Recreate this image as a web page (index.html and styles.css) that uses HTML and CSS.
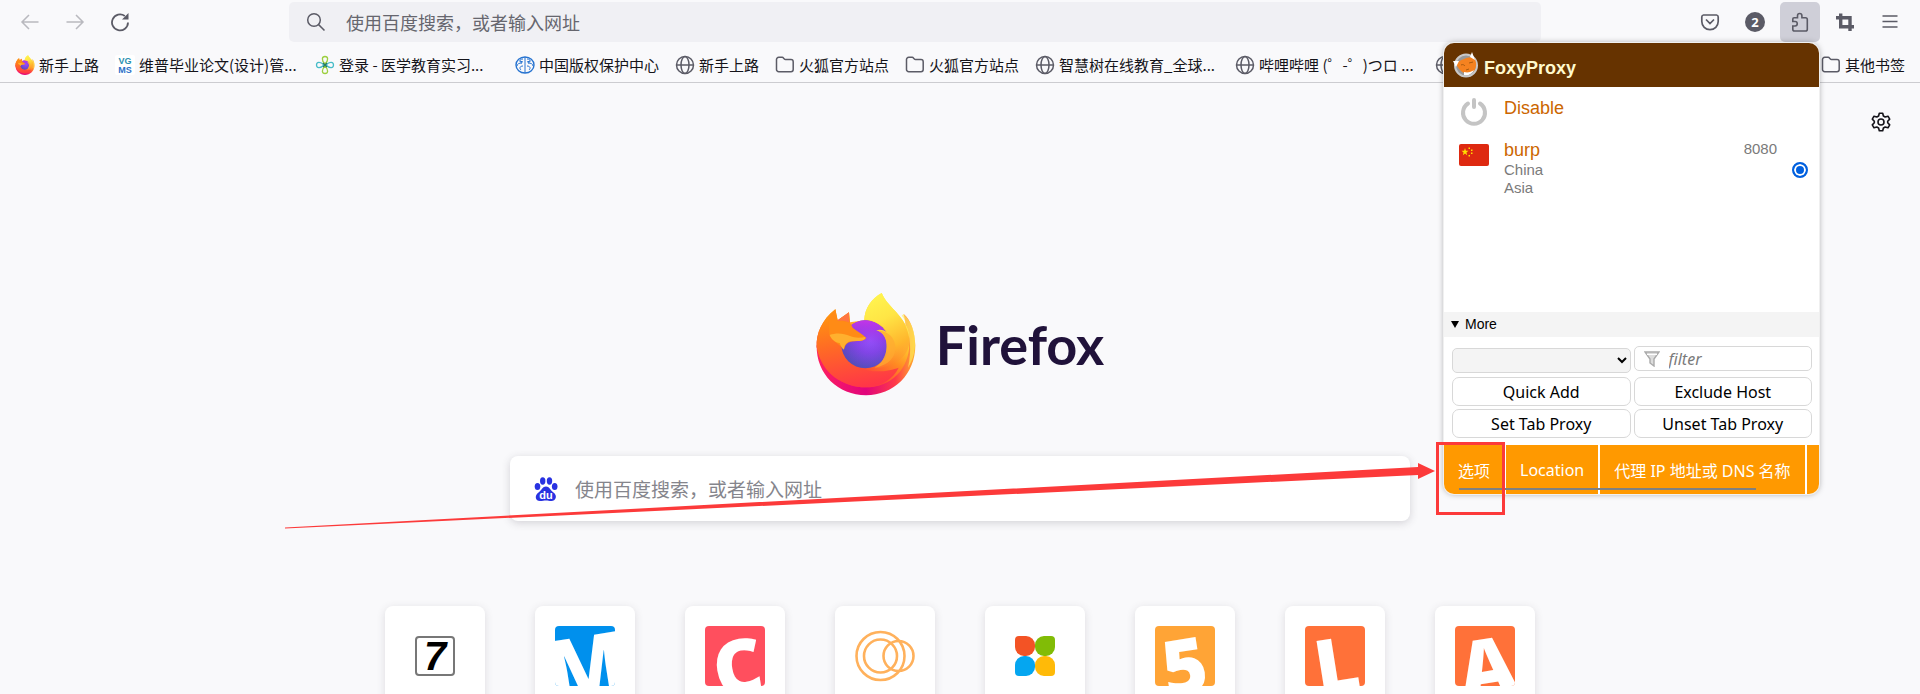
FILE: index.html
```html
<!DOCTYPE html>
<html lang="zh-CN">
<head>
<meta charset="utf-8">
<title>Firefox</title>
<link rel="stylesheet" href="styles.css">
</head>
<body>
<svg class="defs" aria-hidden="true">
  <defs>
    <linearGradient id="fx-body" x1="0.85" y1="0.1" x2="0.25" y2="1">
      <stop offset="0.05" stop-color="#fff44f"/><stop offset="0.3" stop-color="#ffc82e"/><stop offset="0.5" stop-color="#ff8a22"/><stop offset="0.75" stop-color="#ff4538"/><stop offset="1" stop-color="#ff2a50"/>
    </linearGradient>
    <linearGradient id="fx-left" x1="0.3" y1="0" x2="0.5" y2="1">
      <stop offset="0" stop-color="#ff980e"/><stop offset="0.45" stop-color="#ff6a25"/><stop offset="1" stop-color="#ff3647"/>
    </linearGradient>
    <linearGradient id="fx-rim" x1="0" y1="0" x2="1" y2="0">
      <stop offset="0" stop-color="#ff2060"/><stop offset="0.5" stop-color="#e0047c"/><stop offset="0.8" stop-color="#ff3a48"/><stop offset="1" stop-color="#ffb22c"/>
    </linearGradient>
    <radialGradient id="fx-globe" cx="0.6" cy="0.4" r="0.7">
      <stop offset="0" stop-color="#9059ff"/><stop offset="0.4" stop-color="#8048e8"/><stop offset="1" stop-color="#4b4fb0"/>
    </radialGradient>
    <linearGradient id="fx-shade" x1="0" y1="0" x2="0" y2="1">
      <stop offset="0" stop-color="#c435e8"/><stop offset="0.5" stop-color="#a030e8" stop-opacity="0.2"/><stop offset="1" stop-color="#6030c0" stop-opacity="0"/>
    </linearGradient>
    <linearGradient id="fx-flame" x1="0.3" y1="0" x2="0.6" y2="1">
      <stop offset="0" stop-color="#fff44f"/><stop offset="0.35" stop-color="#ffe545"/><stop offset="0.75" stop-color="#ffb52c"/><stop offset="1" stop-color="#ff7a30" stop-opacity="0"/>
    </linearGradient>
    <symbol id="firefox" viewBox="50 36 300 310">
      <path fill="url(#fx-rim)" d="M52 195C50 282 117 345 200 345S348 282 348 195C346 155 335 118 313 101C316 116 319 124 319 138Z"/>
      <path fill="url(#fx-body)" d="M108 87C68 118 50 160 52 200C66 280 132 321 200 321C275 321 330 265 330 190C329 160 326 142 319 135C297 92 262 75 247 38C216 55 196 84 195 120L152 126L149 96L115 120Z"/>
      <path fill="url(#fx-left)" d="M108 87C68 118 50 160 52 200C66 280 132 321 200 321C245 320 282 296 298 262C260 276 170 290 135 215L152 126L149 96L115 120Z"/>
      <circle cx="198" cy="192" r="72" fill="url(#fx-globe)"/>
      <circle cx="198" cy="192" r="72" fill="url(#fx-shade)"/>
      <path fill="url(#fx-flame)" d="M247 38C216 55 196 84 195 118C225 119 252 133 265 157C254 148 242 146 231 150C254 157 263 178 262 200C261 228 245 252 225 264C275 262 328 235 330 185C329 160 326 145 319 135C297 92 262 75 247 38Z"/>
      <path fill="#ffa930" opacity="0.7" d="M231 150C256 156 263 178 262 203C261 228 245 252 225 262C270 255 288 230 288 203C288 175 270 152 231 150Z"/>
      <path fill="#fff05a" d="M313 101C338 125 348 160 347 195C346 220 338 245 326 262C338 210 332 165 319 138C318 124 316 114 307 106Z" opacity="0.65"/>
      <path fill="#ff8b16" d="M108 87C100 95 92 106 88 115L90 163C98 180 115 190 135 205C136 195 142 187 154 184C172 181 193 185 201 173C192 162 174 153 160 142C157 136 154 130 149 126C136 123 124 120 115 122C111 111 109 98 108 87Z"/>
      <path fill="#ffb02e" d="M91 164C110 157 132 158 152 167C168 174 185 172 198 170C199 181 180 183 160 182C142 183 134 194 134 208C127 204 124 196 121 188C107 187 97 178 91 164Z"/>
      <path fill="#ff7640" d="M115 120L149 96L149 126C139 122 126 120 115 122Z"/>
    </symbol>
    <symbol id="globe" viewBox="0 0 20 20">
      <g fill="none" stroke="#5b5b66" stroke-width="1.5"><circle cx="10" cy="10" r="8.5"/><ellipse cx="10" cy="10" rx="4" ry="8.5"/><path d="M1.5 10H18.5"/></g>
    </symbol>
    <symbol id="folder" viewBox="0 0 20 20">
      <path fill="none" stroke="#5b5b66" stroke-width="1.5" stroke-linejoin="round" d="M1.5 4.500A2.200 2.200 0 0 1 3.700 2.300H7.200C8.500 2.300 9.200 4.600 10.500 4.600H16A2.200 2.200 0 0 1 18.200 6.800V14.500A2.200 2.200 0 0 1 16 16.700H3.700A2.200 2.200 0 0 1 1.500 14.500Z"/>
    </symbol>
  </defs>
</svg>

<header>
  <nav class="toolbar">
    <button class="tool faded" aria-label="后退"><svg viewBox="0 0 20 20"><path d="M18.500 10H2M9 3L2 10L9 17"/></svg></button>
    <button class="tool faded" aria-label="前进"><svg viewBox="0 0 20 20"><path d="M1.500 10H18M11 3L18 10L11 17"/></svg></button>
    <button class="tool" aria-label="刷新"><svg viewBox="0 0 20 20"><path stroke-width="1.800" d="M18 10.500A8 8 0 1 1 14.800 4"/><path class="solid" d="M18.500 1V7.500H12Z"/></svg></button>
    <div class="urlbar">
      <svg viewBox="0 0 20 20"><circle cx="8" cy="8" r="6.300"/><path d="M12.600 12.600L18.500 18.500"/></svg>
      <input type="text" aria-label="地址栏" placeholder="使用百度搜索，或者输入网址">
    </div>
    <button class="tool" aria-label="Pocket"><svg viewBox="0 0 20 20"><path stroke-width="1.700" d="M3.500 3H16.500A2 2 0 0 1 18.200 5V9.500A8.200 8.200 0 0 1 1.800 9.500V5A2 2 0 0 1 3.500 3ZM6 7.500L10 11.500L14 7.500"/></svg></button>
    <button class="tool" aria-label="账户"><span class="count">2</span></button>
    <button class="tool active" aria-label="扩展"><svg viewBox="0 0 20 20"><path stroke-width="1.600" d="M2.800 9.500V7A1.300 1.300 0 0 1 4.100 5.700H7.500V3.700A2.200 2.200 0 0 1 11.900 3.700V5.700H15.500A1.800 1.800 0 0 1 17.300 7.500V17.200A1.800 1.800 0 0 1 15.500 19H4.600A1.800 1.800 0 0 1 2.800 17.200V14H5A2.200 2.200 0 0 0 5 9.500Z"/></svg></button>
    <button class="tool" aria-label="截图"><svg viewBox="0 0 20 20"><path stroke-width="3.400" d="M1 5.700H15V19M5.700 1.500V14.700H19"/></svg></button>
    <button class="tool" aria-label="菜单"><svg viewBox="0 0 20 20"><path d="M2.500 4H17.500M2.500 9.500H17.500M2.500 15H17.500"/></svg></button>
  </nav>
  <nav class="bookmarks">
    <a href="#"><svg><use href="#firefox"/></svg><span>新手上路</span></a>
    <a href="#" class="long"><svg viewBox="0 0 20 20" class="vgms"><rect width="20" height="20" rx="2" fill="#fff"/><text x="10" y="9" fill="#2a8fb0">VG</text><text x="10" y="18" fill="#2a70c8">MS</text></svg><span>维普毕业论文(设计)管...</span></a>
    <a href="#" class="long"><svg viewBox="0 0 20 20" fill="none" stroke-width="1.300"><path stroke="#9ccf3f" d="M10 9C6 5 7 1.500 10 1.500S14 5 10 9ZM10 11C6 15 7 18.500 10 18.500S14 15 10 11Z"/><path stroke="#46bcc8" d="M9 10C5 6 1.500 7 1.500 10S5 14 9 10ZM11 10C15 6 18.500 7 18.500 10S15 14 11 10Z"/><path stroke="#287c62" d="M8 8L12 12M12 8L8 12"/></svg><span>登录 - 医学教育实习...</span></a>
    <a href="#"><svg viewBox="0 0 20 20" fill="none" stroke="#2673d0"><ellipse cx="10" cy="10" rx="9" ry="8" stroke-width="1.400"/><path d="M10 2V18M8 4C4 4 4 7 7 8C4 8 2 9 2 11M8 11C5 11 4 13 6 15M12 4C16 4 16 7 13 8C16 8 18 9 18 11M12 11C15 11 16 13 14 15M5 6L8 7M15 6L12 7"/></svg><span>中国版权保护中心</span></a>
    <a href="#"><svg><use href="#globe"/></svg><span>新手上路</span></a>
    <a href="#"><svg><use href="#folder"/></svg><span>火狐官方站点</span></a>
    <a href="#"><svg><use href="#folder"/></svg><span>火狐官方站点</span></a>
    <a href="#" class="long"><svg><use href="#globe"/></svg><span>智慧树在线教育_全球...</span></a>
    <a href="#" class="long"><svg><use href="#globe"/></svg><span>哔哩哔哩 (゜-゜)つロ ...</span></a>
    <a href="#" aria-label="书签"><svg><use href="#globe"/></svg></a>
    <a href="#" class="other"><svg><use href="#folder"/></svg><span>其他书签</span></a>
  </nav>
</header>

<main>
  <button class="settings" aria-label="设置"><svg viewBox="0 0 20 20"><circle cx="10" cy="10" r="3"/><path d="M8.300 1.200H11.700L12.400 4L14.200 5L17 4.200L18.700 7.100L16.700 9.200V10.800L18.700 12.900L17 15.800L14.200 15L12.400 16L11.700 18.800H8.300L7.600 16L5.800 15L3 15.800L1.300 12.900L3.300 10.800V9.200L1.300 7.100L3 4.200L5.800 5L7.600 4Z"/></svg></button>
  <h1 class="brand"><svg><use href="#firefox"/></svg><span>Firefox</span></h1>
  <form class="search">
    <svg viewBox="0 0 24 24"><g fill="#2932e1"><ellipse cx="3.500" cy="9.500" rx="2.800" ry="3.500"/><ellipse cx="8.700" cy="4" rx="2.700" ry="3.700"/><ellipse cx="15.500" cy="4" rx="2.700" ry="3.700"/><ellipse cx="20.700" cy="9.500" rx="2.800" ry="3.500"/><path d="M12 9.500C15.500 9.500 16 13 19.500 15.500C24 19 21.500 24 17.500 24C15 24 14 23.500 12 23.500S8.500 24 6 24C1.500 24 0 19 4.500 15.500C8 13 8.500 9.500 12 9.500Z"/></g><text x="12" y="22">du</text></svg>
    <input type="text" aria-label="搜索" placeholder="使用百度搜索，或者输入网址">
  </form>
  <div class="tiles">
    <a href="#" class="tile"><span class="seven">7</span></a>
    <a href="#" class="tile"><svg class="blue" viewBox="0 0 60 60"><text x="36" y="70" transform="rotate(-9 36 70)">M</text></svg></a>
    <a href="#" class="tile"><svg class="pink" viewBox="0 0 60 60"><text x="37" y="68" transform="rotate(-9 37 68)">C</text></svg></a>
    <a href="#" class="tile"><svg viewBox="0 0 60 60" fill="none" stroke="#ffb15c" stroke-width="2.600"><circle cx="25.500" cy="30" r="24"/><circle cx="25.500" cy="30" r="16.500"/><circle cx="43.500" cy="30" r="15"/></svg></a>
    <a href="#" class="tile"><span class="petals"><i></i><i></i><i></i><i></i></span></a>
    <a href="#" class="tile"><svg class="amber" viewBox="0 0 60 60"><text x="34" y="67" transform="rotate(-9 34 67)">5</text></svg></a>
    <a href="#" class="tile"><svg class="orange" viewBox="0 0 60 60"><text x="36" y="66" transform="rotate(-9 36 66)">L</text></svg></a>
    <a href="#" class="tile"><svg class="orange" viewBox="0 0 60 60"><text x="36" y="67" transform="rotate(-9 36 67)">A</text></svg></a>
  </div>
</main>

<section class="popup">
  <h2><svg viewBox="0 0 26 26"><circle cx="13" cy="13.500" r="11" fill="#999" stroke="#c8c8c8" stroke-width="2"/><path fill="#f58220" d="M3 11C8 8 14 5 20 5C24 9 24 15 21 19C18 21 14 21 11 21C7 19 4 15 3 11Z"/><path fill="#fff" d="M0 9L6 9L3 15ZM19 0L22 8L17 5ZM11 20C15 21 18 20 21 18C19 22 15 24 11 23Z"/><path stroke="#a85a10" fill="none" d="M8 13C10 12 11 13 12 14M16 11L20 10M13 18L16 17"/></svg><span>FoxyProxy</span></h2>
  <div class="proxies">
    <div class="proxy">
      <svg viewBox="0 0 30 30"><path fill="none" stroke="#c4c4c4" stroke-width="4" stroke-linecap="round" d="M9 6.500A11 11 0 1 0 21 6.500M15 3V10"/></svg>
      <div class="names"><strong>Disable</strong></div>
    </div>
    <label class="proxy">
      <svg viewBox="0 0 30 30"><rect y="5" width="30" height="22" rx="2" fill="#de2910"/><path fill="#ffde00" d="M6 9L6.900 11.800H9.500L7.400 13.500L8.200 16.200L6 14.500L3.800 16.200L4.600 13.500L2.500 11.800H5.100ZM9.500 8.500h1.500v1.500h-1.500ZM12 10.500h1.500v1.500H12ZM12 13.500h1.500v1.500H12ZM9.500 16h1.500v1.500h-1.500Z"/></svg>
      <span class="names"><strong>burp</strong><span>China</span><span>Asia</span></span>
      <span class="port">8080</span>
      <input type="radio" name="proxy" checked>
    </label>
  </div>
  <details open>
    <summary>More</summary>
    <div class="controls">
      <select aria-label="Pattern"><option></option></select>
      <div class="filter"><svg viewBox="0 0 16 16"><path fill="#ddd" stroke="#aaa" stroke-width="1.400" d="M1 1H15L10 8V15L6 12V8Z"/><path stroke="#fff" d="M3 3.500H13"/></svg><input type="text" aria-label="filter" placeholder="filter"></div>
      <button>Quick Add</button>
      <button>Exclude Host</button>
      <button>Set Tab Proxy</button>
      <button>Unset Tab Proxy</button>
    </div>
  </details>
  <footer><button>选项</button><button>Location</button><button>代理 IP 地址或 DNS 名称</button><span class="thumb"></span></footer>
</section>

<svg class="arrow" viewBox="0 0 1150 70" aria-hidden="true"><path fill="#fc3a3a" d="M0 64.500L570 34L1133 4V0L1150 8L1133 16V12L570 38.500L0 65.500Z"/></svg>
<div class="marker"></div>
</body>
</html>
```
FILE: styles.css
```css
* { box-sizing: border-box; }
body {
  margin: 0;
  height: 100vh;
  overflow: hidden;
  position: relative;
  background: #f9f9fb;
  color: #15141a;
  font-family: "Noto Sans", "Noto Sans CJK SC", sans-serif;
}
button { border: 0; background: none; padding: 0; font: inherit; color: inherit; }
a { color: inherit; text-decoration: none; }
input { font: inherit; min-width: 0; }
.defs { position: absolute; width: 0; height: 0; }

.toolbar { display: flex; align-items: center; gap: 5px; height: 44px; padding: 0 10px; }
.tool { display: grid; place-items: center; width: 40px; height: 40px; border-radius: 5px; }
.tool svg, .urlbar svg { width: 20px; height: 20px; fill: none; stroke: #5b5b66; stroke-width: 1.5; }
.tool .solid { fill: #5b5b66; stroke: none; }
.faded { opacity: 0.4; }
.active { background: #cfcfd8; }
.count { display: grid; place-items: center; width: 20px; height: 20px; border-radius: 50%; background: #5b5b66; color: #fff; font: bold 13px "Open Sans", sans-serif; }
.urlbar { flex: 1; display: flex; align-items: center; gap: 20px; height: 40px; margin: 0 144px; padding: 0 17px; border-radius: 5px; background: #f0f0f4; }
.urlbar input { flex: 1; border: 0; padding: 0; background: none; font-family: "Noto Sans CJK SC", sans-serif; font-size: 18px; }
.urlbar input::placeholder { color: #66666e; opacity: 1; }

.bookmarks { display: flex; align-items: center; gap: 16px; height: 39px; padding: 3px 15px 0 15px; border-bottom: 1px solid #ccccd0; font: 15px/20px "Noto Sans CJK SC", sans-serif; white-space: nowrap; }
.bookmarks a { display: flex; align-items: center; gap: 4px; flex: none; }
.bookmarks svg { width: 20px; height: 20px; flex: none; }
.bookmarks .long { width: 184px; }
.bookmarks .other { margin-left: auto; }
.vgms text { font: bold 9px "Liberation Sans", sans-serif; text-anchor: middle; }

main { display: flex; flex-direction: column; align-items: center; padding-top: 209px; position: relative; }
.settings { position: absolute; top: 29px; right: 29px; width: 20px; height: 20px; }
.settings svg { display: block; fill: none; stroke: #15141a; stroke-width: 1.6; stroke-linejoin: round; }
.brand { display: flex; align-items: center; gap: 20px; margin: 0; height: 104px; color: #20123a; font: bold 54px "Lato", sans-serif; }
.brand svg { width: 100px; height: 104px; }
.search { display: flex; align-items: center; gap: 17px; width: 900px; max-width: 90%; height: 65px; margin-top: 60px; padding: 0 24px; border-radius: 8px; background: #fff; box-shadow: 0 2px 8px rgba(58, 57, 68, 0.2); }
.search svg { width: 24px; height: 24px; }
.search text { fill: #fff; font: bold 11px "Liberation Sans", sans-serif; text-anchor: middle; }
.search input { flex: 1; border: 0; padding: 0; background: none; font-family: "Noto Sans CJK SC", sans-serif; font-size: 19px; }
.search input::placeholder { color: #85858c; opacity: 1; }
.tiles { display: flex; gap: 50px; margin-top: 85px; }
.tile { display: grid; place-items: center; width: 100px; height: 100px; border-radius: 8px; background: #fff; box-shadow: 0 2px 8px rgba(58, 57, 68, 0.15); }
.tile svg { width: 60px; height: 60px; border-radius: 4px; overflow: hidden; }
.tile text { fill: #fff; font: 900 76px "Open Sans", sans-serif; text-anchor: middle; }
.tile .blue text { font-size: 84px; }
.blue { background: #0090ed; }
.pink { background: #ff4f5e; }
.amber { background: #ffa436; }
.orange { background: #ff7139; }
.seven { display: grid; place-items: center; width: 40px; height: 40px; border: 2px solid #777; border-radius: 4px; color: #000; font: italic bold 40px/36px "Liberation Sans", sans-serif; }
.petals { display: grid; grid-template-columns: 20px 20px; grid-auto-rows: 20px; }
.petals i { border-radius: 9px; }
.petals i:nth-child(1) { background: #f35325; border-top-left-radius: 4px; }
.petals i:nth-child(2) { background: #81bc06; border-top-right-radius: 4px; }
.petals i:nth-child(3) { background: #05a6f0; border-bottom-left-radius: 4px; }
.petals i:nth-child(4) { background: #ffba08; border-bottom-right-radius: 4px; }

.popup { position: absolute; top: 43px; right: 101px; width: 375px; border-radius: 10px; overflow: hidden; background: #fff; box-shadow: 0 0 0 1px #f0f0f0, 0 0 6px rgba(0, 0, 0, 0.35); }
.popup h2 { display: flex; align-items: center; gap: 5px; height: 44px; margin: 0; padding: 0 9px; background: #630; color: #fffacd; font: bold 18px "Liberation Sans", sans-serif; }
.popup h2 svg { width: 26px; height: 26px; }
.popup h2 span { padding-top: 6px; }
.proxies { display: flex; flex-direction: column; gap: 14px; height: 225px; padding: 10px 11px 0 15px; font: 15px/18px "Liberation Sans", sans-serif; color: #7a7a7a; }
.proxy { display: flex; gap: 15px; }
.proxy svg { width: 30px; height: 30px; }
.names { flex: 1; display: flex; flex-direction: column; }
.names strong { font-size: 18px; line-height: 22px; font-weight: normal; color: #c60; }
.proxy .port { padding-top: 1px; }
.proxy input { align-self: center; width: 16px; height: 16px; margin: 4px 0 0; appearance: none; border: 2px solid #0060df; border-radius: 50%; background: #0060df; box-shadow: inset 0 0 0 2px #fff; }
.proxy:first-child { height: 28px; }
summary { height: 25px; padding-left: 7px; background: #f4f4f4; color: #000; font: 14px/25px "Liberation Sans", sans-serif; list-style: none; display: flex; align-items: center; gap: 6px; }
summary::before { content: ""; border: 4px solid transparent; border-top: 7px solid #000; border-bottom: 0; }
.controls { display: grid; grid-template-columns: repeat(2, minmax(0, 1fr)); gap: 3px; padding: 9px 7px 7px 8px; }
.controls select { min-width: 0; height: 25px; margin: 2px 0 1px; border: 1px solid #d8d8d8; border-radius: 5px; background: #f4f4f4; color: #000; font-size: 16px; }
.controls button { height: 29px; border: 1px solid #d8d8d8; border-radius: 7px; background: #fff; color: #000; font-size: 16px; line-height: 24px; white-space: nowrap; }
.filter { display: flex; align-items: center; gap: 9px; height: 25px; padding: 0 9px; border: 1px solid #d8d8d8; border-radius: 5px; }
.filter svg { width: 16px; height: 16px; }
.filter input { flex: 1; border: 0; padding: 0; background: none; font-style: italic; font-size: 16px; line-height: 20px; }
.filter input::placeholder { color: #7a7a7a; opacity: 1; }
.popup footer { position: relative; display: flex; height: 49px; background: #f90; color: #fff; white-space: nowrap; }
.popup footer button { padding: 0 14px; font-size: 16px; border-right: 2px solid #fff; }
.thumb { position: absolute; left: 15px; bottom: 4px; width: 297px; height: 2px; background: #808080; }

.arrow { position: absolute; left: 285px; top: 463px; width: 1150px; height: 70px; }
.marker { position: absolute; top: 442px; right: 415px; width: 69px; height: 73px; border: 3px solid #fc3a3a; }
```
